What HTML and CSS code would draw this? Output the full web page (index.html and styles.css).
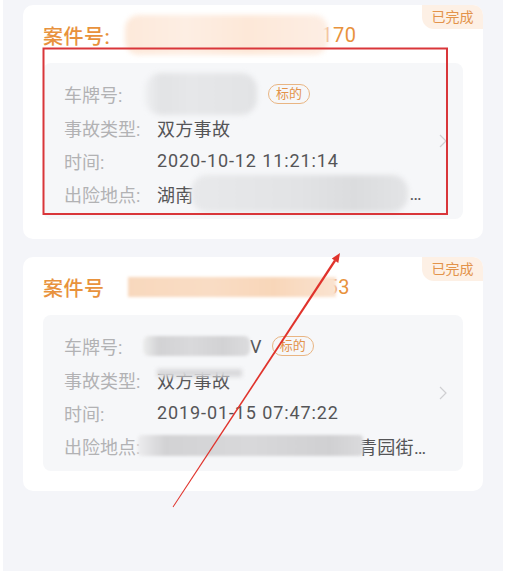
FILE: index.html
```html
<!DOCTYPE html>
<html lang="zh-CN">
<head>
<meta charset="utf-8">
<title>案件列表</title>
<link rel="stylesheet" href="styles.css">
</head>
<body>
<div class="page">
  <div class="card">
    <div class="badge">已完成</div>
    <div class="case-head">
      <span class="case-label">案件号:</span>
      <span class="case-no"><span class="redact redact-head1"></span>170</span>
    </div>
    <div class="detail">
      <div class="rows">
        <div class="row"><span class="label">车牌号:</span><span class="value"><span class="redact redact-plate1"></span></span><span class="tag">标的</span></div>
        <div class="row"><span class="label">事故类型:</span><span class="value">双方事故</span></div>
        <div class="row"><span class="label">时间:</span><span class="value time">2020-10-12 11:21:14</span></div>
        <div class="row"><span class="label">出险地点:</span><span class="value">湖南<span class="redact redact-addr1"></span>…</span></div>
      </div>
      <svg class="chevron" width="8" height="14" viewBox="0 0 8 14"><path d="M1 1 L7 7 L1 13" fill="none" stroke="#cfcfd2" stroke-width="1.2"/></svg>
    </div>
  </div>

  <div class="card">
    <div class="badge">已完成</div>
    <div class="case-head">
      <span class="case-label">案件号</span>
      <span class="case-no case-no-2"><span class="redact redact-head2"></span>53</span>
    </div>
    <div class="detail">
      <div class="rows">
        <div class="row"><span class="label">车牌号:</span><span class="value"><span class="redact redact-plate2"></span>V</span><span class="tag tag-2">标的</span></div>
        <div class="row"><span class="label">事故类型:</span><span class="value smeared">双方事故</span></div>
        <div class="row"><span class="label">时间:</span><span class="value time">2019-01-15 07:47:22</span></div>
        <div class="row"><span class="label">出险地点:</span><span class="value"><span class="redact redact-addr2"></span>青园街…</span></div>
      </div>
      <svg class="chevron" width="8" height="14" viewBox="0 0 8 14"><path d="M1 1 L7 7 L1 13" fill="none" stroke="#cfcfd2" stroke-width="1.2"/></svg>
    </div>
  </div>
</div>

<svg class="annot" width="509" height="571" viewBox="0 0 509 571">
  <rect x="43.5" y="48.5" width="403.5" height="165.5" fill="none" stroke="#d9363a" stroke-width="2"/>
  <polygon points="173.4,507.3 172.6,506.7 334.1,259.8 336.0,261.2" fill="#e0332c"/>
  <polygon points="340,253 338.3,263 331.8,258.6" fill="#e0332c"/>
</svg>
</body>
</html>
```

FILE: styles.css
```css
* { box-sizing: border-box; }

html, body {
  margin: 0;
  padding: 0;
  background: #ffffff;
}

body {
  font-family: Roboto, "Noto Sans CJK SC", sans-serif;
  width: 509px;
  height: 571px;
  overflow: hidden;
  position: relative;
}

.page {
  margin-left: 3px;
  width: 500px;
  min-height: 571px;
  background: #f4f5f9;
  padding: 5px 20px 0 20px;
  display: flex;
  flex-direction: column;
  gap: 18px;
}

.card {
  position: relative;
  background: #ffffff;
  border-radius: 10px;
  padding: 0 20px 20px 20px;
}

.badge {
  position: absolute;
  top: 0;
  right: 0;
  width: 61px;
  height: 24px;
  background: #fdf0e5;
  color: #e3934a;
  font-size: 14px;
  line-height: 24px;
  text-align: center;
  border-radius: 0 10px 0 12px;
}

.case-head {
  height: 58px;
  padding-top: 2px;
  display: flex;
  align-items: center;
  color: #e8923d;
  font-size: 20px;
}

.case-label {
  font-weight: 500;
  letter-spacing: 0.5px;
}

.case-no {
  display: flex;
  align-items: center;
  font-size: 20px;
  color: #e8923d;
  letter-spacing: 0.5px;
}

.case-no-2 {
  margin-left: 3px;
}

.redact {
  display: inline-block;
  position: relative;
  z-index: 1;
  filter: blur(2.5px);
}

.redact-head1 {
  width: 203px;
  height: 40px;
  margin: -10px -7px -10px 15px;
  border-radius: 14px;
  background: linear-gradient(90deg, #fde9da 0%, #fdeee3 30%, #fde8d8 60%, #fdeee4 100%);
}

.redact-head2 {
  width: 208px;
  height: 20px;
  margin: 0 -9px 0 20px;
  background: linear-gradient(90deg, #f8d8bd 0%, #f9dcc4 40%, #f8d6b9 70%, #fae3d0 100%);
  filter: blur(1.5px);
}

.detail {
  background: #f6f7f9;
  border-radius: 8px;
  padding: 14px 16px 9px 21px;
  display: flex;
  align-items: center;
}

.rows {
  flex: 1;
}

.row {
  height: 33px;
  display: flex;
  align-items: center;
  white-space: nowrap;
}

.row:first-child {
  height: 34px;
}

.label {
  width: 93px;
  flex: none;
  font-size: 18px;
  color: #b2b2b4;
}

.value {
  display: flex;
  align-items: center;
  font-size: 18px;
  color: #555557;
  position: relative;
  letter-spacing: 0.3px;
}

.time {
  letter-spacing: 0.9px;
}

.redact-plate1 {
  width: 112px;
  height: 42px;
  margin: -10px 0 -10px -12px;
  border-radius: 16px;
  background: linear-gradient(90deg, #eeeff1 0%, #e2e3e5 15%, #e6e7e9 40%, #e2e3e5 100%);
}

.redact-plate2 {
  width: 107px;
  height: 20px;
  margin: 0 0 0 -14px;
  border-radius: 6px;
  background: linear-gradient(90deg, #eceded 0%, #d2d2d4 15%, #d9d9db 45%, #d2d2d4 75%, #dcdcde 100%);
  filter: blur(1.5px);
}

.redact-addr1 {
  width: 217px;
  height: 37px;
  margin: -8px 2px -8px -3px;
  border-radius: 16px;
  background: linear-gradient(90deg, #e8e9eb 0%, #e2e3e5 50%, #dbdcde 75%, #e3e4e6 100%);
}

.redact-addr2 {
  width: 225px;
  height: 21px;
  margin: 0 -4px 0 -19px;
  border-radius: 4px;
  background: linear-gradient(90deg, #ececee 0%, #d2d2d4 12%, #d8d8da 50%, #d0d0d2 85%, #dadadc 100%);
  filter: blur(1.5px);
}

.smeared::before {
  content: "";
  position: absolute;
  left: 0;
  top: 2px;
  width: 85px;
  height: 8px;
  background: #d9d9db;
  filter: blur(2px);
}

.tag {
  margin-left: 11px;
  height: 20px;
  padding: 0 7px;
  border: 1px solid #e9b583;
  border-radius: 10px;
  color: #e3934a;
  font-size: 13px;
  line-height: 18px;
}

.tag-2 {
  margin-left: 10px;
}

.chevron {
  flex: none;
  margin-top: -6px;
}

.annot {
  position: absolute;
  left: 0;
  top: 0;
  pointer-events: none;
  z-index: 5;
}
```
